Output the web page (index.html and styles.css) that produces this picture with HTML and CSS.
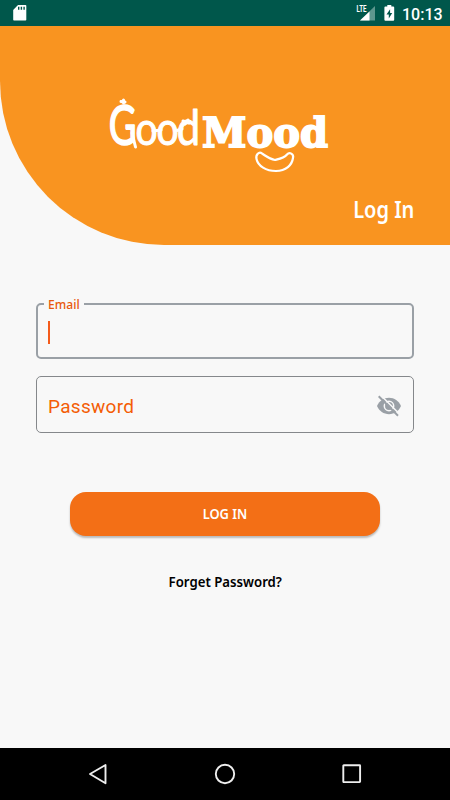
FILE: index.html
```
<!DOCTYPE html>
<html lang="en">

<head>
    <meta charset="UTF-8">
    <title>GoodMood - Log In</title>
    <link rel="stylesheet" href="styles.css">
</head>

<body>
    <div class="status-bar">
        <svg class="sd-icon" width="14" height="18" viewBox="0 0 14 18">
            <path fill="#fff" d="M5 1h7.5q.8 0 .8.8v13.900q0 .8-.8.8H1q-.8 0-.8-.8V6z" />
            <path fill="#00574b" d="M5 2.800h1.400v3H5zM7.700 2.800h1.400v3H7.700zM10.400 2.800h1.400v3h-1.400z" />
        </svg>
        <div class="status-right">
            <svg width="20" height="18" viewBox="0 0 20 18">
                <path fill="#5e978e" d="M19 2v14.500H4z" />
                <path fill="#fff" d="M13.500 7.500V16.500H4z" />
                <path fill="#00574b" d="M0 0h10.800v9H0z" />
                <text class="lte" x="0.500" y="8.200" textLength="10" lengthAdjust="spacingAndGlyphs">LTE</text>
            </svg>
            <svg class="battery" width="11" height="18" viewBox="0 0 11 18">
                <path fill="#fff" d="M3.300 1h4v1.600h1.900q1 0 1 1v12.200q0 1-1 1H1.400q-1 0-1-1V3.600q0-1 1-1h1.900z" />
                <path fill="#00574b" d="M6.100 5.200 2.500 10.600h2.300v4L8.200 9H6.100z" />
            </svg>
            <span class="time">10:13</span>
        </div>
    </div>

    <header class="header">
        <svg class="logo" width="222" height="78" viewBox="108 97 222 78">
            <text class="good good-g" x="160" y="145">G</text>
            <text class="good" y="145">
                <tspan class="good-o" x="159.500">o</tspan><tspan class="good-o" x="184">o</tspan><tspan class="good-d" x="208">d</tspan>
            </text>
            <!-- sausage knots -->
            <path class="knot" d="M121 101.500l4 .5M123.500 100v3M183 121l6 2M185 124l3-4" />
            <!-- loops joining the letters -->
            <path class="knot" d="M132 133l3.500 14M153 131l8-1M175 131l7-2" />
            <text class="mood" x="202" y="146.500" textLength="126" lengthAdjust="spacingAndGlyphs">Mood</text>
            <path class="smile" d="M262 153.500C259 151 255.500 155 256.500 159C258 166 266 171 276 171C286 171 292 165 293 158C294 154 289.500 151.500 287 154.500C284 158 281 158.500 275 160C269 159 266 156 262 153.500Z" />
        </svg>
        <h1 class="title">Log In</h1>
    </header>

    <form class="login-form">
        <div class="field field-active">
            <label class="floating-label" for="email"><span class="label-text">Email</span></label>
            <span class="caret"></span>
            <input type="text" id="email">
        </div>
        <div class="field">
            <input type="password" id="password" placeholder="Password">
            <svg class="eye" width="26" height="26" viewBox="0 0 26 26">
                <path fill="#9aa0a6" d="M1 13C3.200 8 7.700 4.800 13 4.800S22.800 8 25 13C22.800 18 18.300 21.200 13 21.200S3.200 18 1 13z" />
                <circle cx="13" cy="13" r="4.700" fill="none" stroke="#f8f8f8" stroke-width="1.500" />
                <circle cx="13" cy="13" r="3" fill="#9aa0a6" />
                <path stroke="#f8f8f8" stroke-width="1.600" d="M4.500 2 23.500 21" />
                <path stroke="#9aa0a6" stroke-width="2" d="M2.700 3.300 22 22.700" />
            </svg>
        </div>
        <button type="submit" class="login-btn"><span class="btn-text">LOG IN</span></button>
        <a class="forget">Forget Password?</a>
    </form>

    <nav class="nav-bar">
        <svg width="22" height="22" viewBox="0 0 22 22">
            <path d="M18.500 2v18.200L3 11z" />
        </svg>
        <svg width="22" height="22" viewBox="0 0 22 22">
            <circle cx="11" cy="11" r="9.200" />
        </svg>
        <svg width="22" height="22" viewBox="0 0 22 22">
            <rect x="2.300" y="2.300" width="16.800" height="16.800" rx=".5" />
        </svg>
    </nav>
</body>

</html>
```
FILE: styles.css
```
* {
    box-sizing: border-box;
}

body {
    margin: 0;
    width: 450px;
    height: 800px;
    display: flex;
    flex-direction: column;
    overflow: hidden;
    background: #f8f8f8;
    font-family: "Noto Sans", sans-serif;
}

.status-bar {
    height: 26px;
    padding: 0 8px 0 13px;
    display: flex;
    justify-content: space-between;
    align-items: center;
    background: #00574b;
}

.status-right {
    display: flex;
    align-items: center;
}

.lte {
    font: 700 8.5px Roboto, sans-serif;
    fill: #fff;
}

.battery {
    margin-left: 8px;
}

.time {
    width: 40px;
    margin-left: 7px;
    font: 500 16px Roboto, sans-serif;
    color: #fff;
    padding-top: 2px;
}

.header {
    height: 219px;
    padding: 71px 36px 0 108px;
    display: flex;
    flex-direction: column;
    background: #f99420;
    border-bottom-left-radius: 164px;
}

.logo {
    display: block;
    overflow: visible;
}

/* narrow hand-drawn look */
.good {
    transform: scaleX(0.85);
    font-family: Lato, sans-serif;
    font-weight: 400;
    fill: #fff;
    stroke: #fff;
    stroke-width: 1px;
    stroke-linejoin: round;
}

.good-g {
    transform: scaleX(0.68);
    font-size: 56px;
    stroke-width: 1.6px;
}

.good-o {
    font-size: 46px;
}

.good-d {
    font-size: 49px;
}

.mood {
    font: 700 41px "DejaVu Serif", serif;
    fill: #fff;
    stroke: #fff;
    stroke-width: 1.8px;
}

.knot,
.smile {
    fill: none;
    stroke: #fff;
    stroke-width: 2.2px;
    stroke-linecap: round;
}

.knot {
    stroke-width: 3px;
}

.title {
    align-self: flex-end;
    margin: 20px 0 0;
    font-size: 23px;
    font-weight: 600;
    line-height: 28px;
    color: #fff;
    transform: scaleX(0.87);
    transform-origin: right;
}

.login-form {
    flex: 1;
    padding: 58px 36px 0;
    display: flex;
    flex-direction: column;
    align-items: center;
}

.field {
    position: relative;
    width: 378px;
    height: 57px;
    margin-bottom: 17px;
    padding: 0 11px;
    display: flex;
    align-items: center;
    border: 1px solid #85888b;
    border-radius: 5px;
}

.field-active {
    height: 56px;
    border: 2px solid #9aa0a6;
    padding: 0 10px;
}

.floating-label {
    position: absolute;
    top: -9px;
    left: 6px;
    width: 40px;
    padding: 0 4px;
    font-size: 12.5px;
    font-weight: 500;
    line-height: 17px;
    background: #f8f8f8;
    color: #e8590c;
}

.label-text {
    display: inline-block;
    transform: scaleX(0.97);
    transform-origin: left;
}

.caret {
    width: 2px;
    height: 23px;
    margin-top: 2px;
    background: #f45b1b;
}

.field input {
    flex: 1;
    min-width: 0;
    padding: 3px 0 0;
    border: 0;
    outline: 0;
    background: none;
    font: 19px Roboto, sans-serif;
    letter-spacing: 0.3px;
}

.field input::placeholder {
    color: #f45d05;
    opacity: 1;
}

.eye {
    margin-top: 2px;
}

.login-btn {
    width: 310px;
    height: 44px;
    margin-top: 42px;
    padding: 0 0 2px;
    border: 0;
    border-radius: 16px;
    background: #f36f16;
    box-shadow: 0 2px 2px rgba(0, 0, 0, 0.25);
    font: 600 15px "Noto Sans", sans-serif;
    color: #fff;
}

.btn-text {
    display: inline-block;
    transform: scaleX(0.86);
}

.forget {
    margin-top: 36px;
    font-size: 14.5px;
    font-weight: 600;
    line-height: 18px;
    color: #000;
    transform: scaleX(0.91);
}

.nav-bar {
    height: 52px;
    padding: 0 87px;
    display: flex;
    justify-content: space-between;
    align-items: center;
    background: #000;
}

.nav-bar svg {
    fill: none;
    stroke: #eee;
    stroke-width: 1.9px;
    stroke-linejoin: round;
}
```
